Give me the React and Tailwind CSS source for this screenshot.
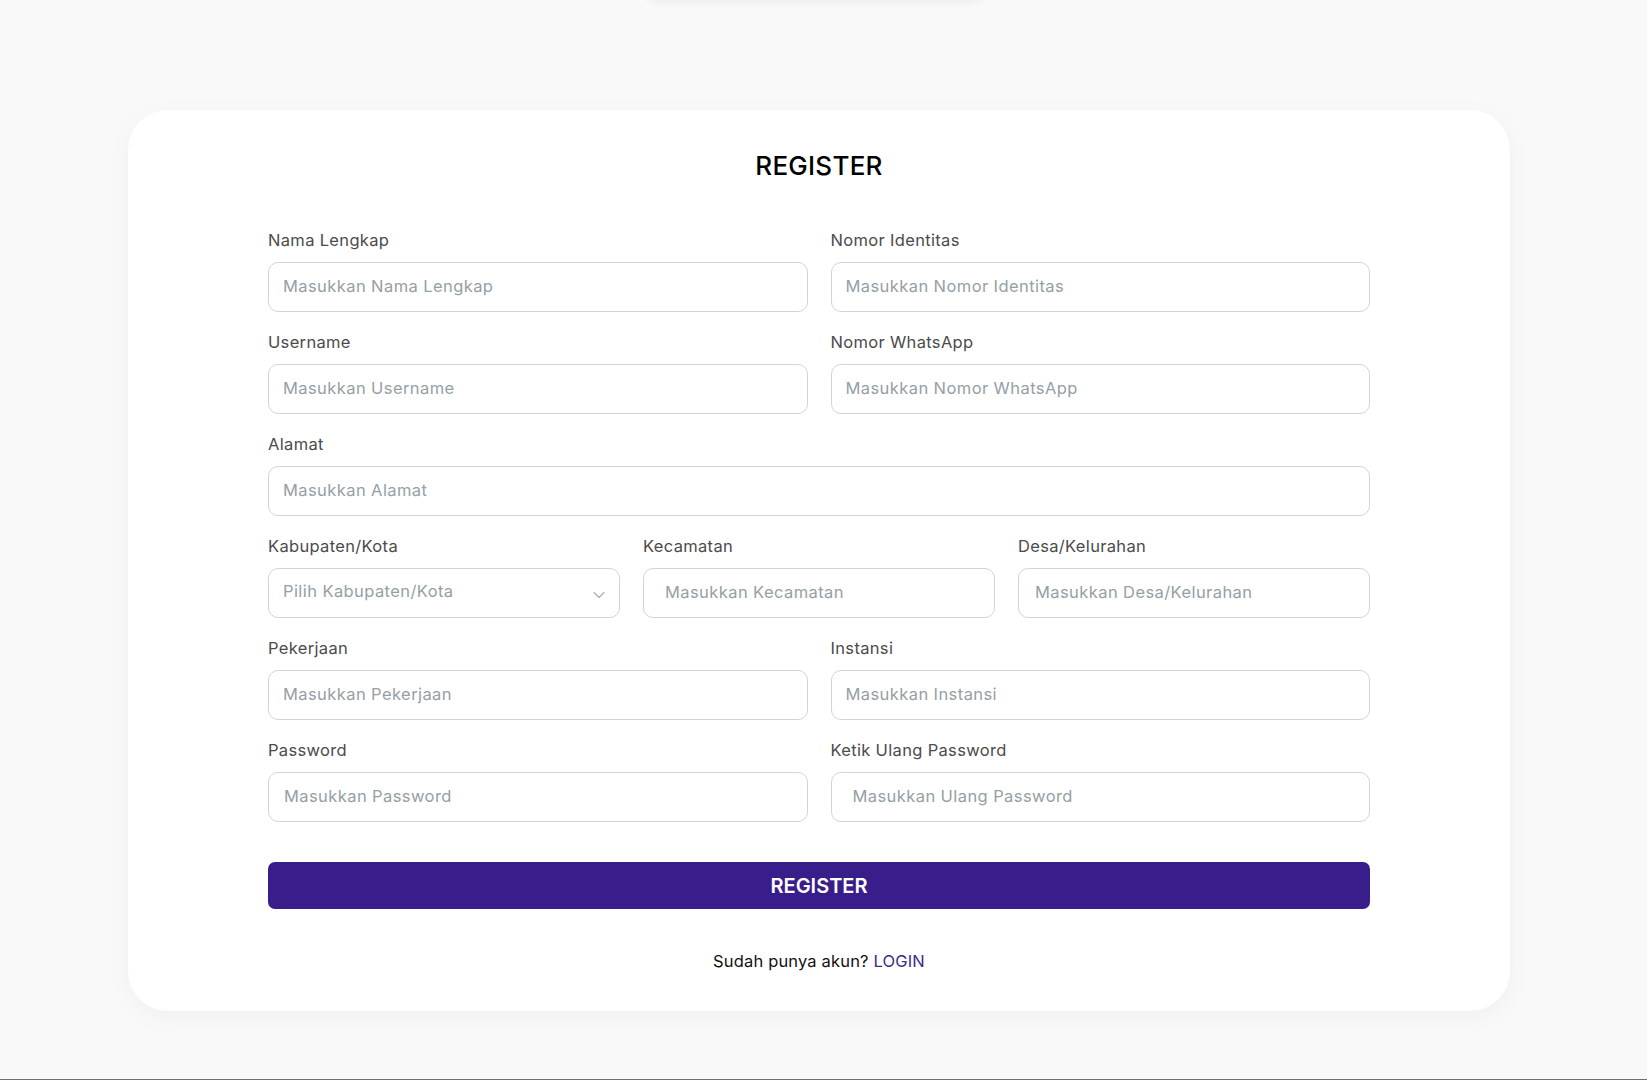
import { ChevronDown } from 'lucide-react'

function Field({ label, placeholder, pad = 'pl-[14px]' }) {
  return (
    <div className="flex flex-col">
      <label className="mb-[10px] h-6 text-[16.5px] leading-6 tracking-[0.02em] text-[#4b4b4b]">{label}</label>
      <input
        type="text"
        placeholder={placeholder}
        className={`h-[50px] w-full rounded-[10px] border border-[#d4d4d4] bg-white pb-[3px] pr-4 text-[16.5px] tracking-[0.025em] text-gray-800 outline-none placeholder:text-[#95a0a6] ${pad}`}
      />
    </div>
  )
}

function SelectField({ label, placeholder }) {
  return (
    <div className="flex flex-col">
      <label className="mb-[10px] h-6 text-[16.5px] leading-6 tracking-[0.02em] text-[#4b4b4b]">{label}</label>
      <div className="relative">
        <select
          defaultValue=""
          className="h-[50px] w-full appearance-none rounded-[10px] border border-[#d4d4d4] bg-white pb-[3px] pl-[14px] pr-10 text-[16.5px] tracking-[0.025em] text-[#95a0a6] outline-none"
        >
          <option value="" disabled>
            {placeholder}
          </option>
        </select>
        <ChevronDown
          className="pointer-events-none absolute right-[11px] top-1/2 h-[20px] w-[20px] -translate-y-[40%] text-[#a9b0b4]"
          strokeWidth={1.5}
        />
      </div>
    </div>
  )
}

export default function App() {
  return (
    <div className="relative min-h-screen overflow-hidden bg-[#f9f9f9] font-['Inter','Noto_Sans',sans-serif]">
      <div className="absolute left-[643px] top-[-40px] h-10 w-[344px] rounded-b-2xl bg-white shadow-[0_2px_8px_rgba(0,0,0,0.06)]" />

      <div className="pt-[110px]">
        <div className="ml-[128px] w-[1382px] rounded-[40px] bg-white px-[140px] pb-[38px] pt-[38px] shadow-[0_6px_24px_rgba(0,0,0,0.04)]">
          <h1 className="text-center text-[26px] font-medium leading-9 tracking-[0.01em] text-black">REGISTER</h1>

          <form className="mt-[44px] flex flex-col gap-[18px]" onSubmit={(e) => e.preventDefault()}>
            <div className="grid grid-cols-2 gap-x-[23px]">
              <Field label="Nama Lengkap" placeholder="Masukkan Nama Lengkap" />
              <Field label="Nomor Identitas" placeholder="Masukkan Nomor Identitas" />
            </div>
            <div className="grid grid-cols-2 gap-x-[23px]">
              <Field label="Username" placeholder="Masukkan Username" />
              <Field label="Nomor WhatsApp" placeholder="Masukkan Nomor WhatsApp" />
            </div>
            <Field label="Alamat" placeholder="Masukkan Alamat" />
            <div className="grid grid-cols-3 gap-x-[23px]">
              <SelectField label="Kabupaten/Kota" placeholder="Pilih Kabupaten/Kota" />
              <Field label="Kecamatan" placeholder="Masukkan Kecamatan" pad="pl-[21px]" />
              <Field label="Desa/Kelurahan" placeholder="Masukkan Desa/Kelurahan" pad="pl-[16px]" />
            </div>
            <div className="grid grid-cols-2 gap-x-[23px]">
              <Field label="Pekerjaan" placeholder="Masukkan Pekerjaan" />
              <Field label="Instansi" placeholder="Masukkan Instansi" />
            </div>
            <div className="grid grid-cols-2 gap-x-[23px]">
              <Field label="Password" placeholder="Masukkan Password" pad="pl-[15px]" />
              <Field label="Ketik Ulang Password" placeholder="Masukkan Ulang Password" pad="pl-[21px]" />
            </div>

            <button
              type="submit"
              className="mt-[22px] h-[47px] w-full rounded-[7px] bg-[#391d8a] text-[20px] font-semibold text-white"
            >
              REGISTER
            </button>
          </form>

          <p className="mt-[40px] text-center text-[16.5px] leading-6 tracking-[0.01em] text-[#111]">
            Sudah punya akun? <a href="#" className="text-[#3b2a8c]">LOGIN</a>
          </p>
        </div>
      </div>

      <div className="mt-[68px] h-10 bg-[#6f6f6f]" />
    </div>
  )
}
